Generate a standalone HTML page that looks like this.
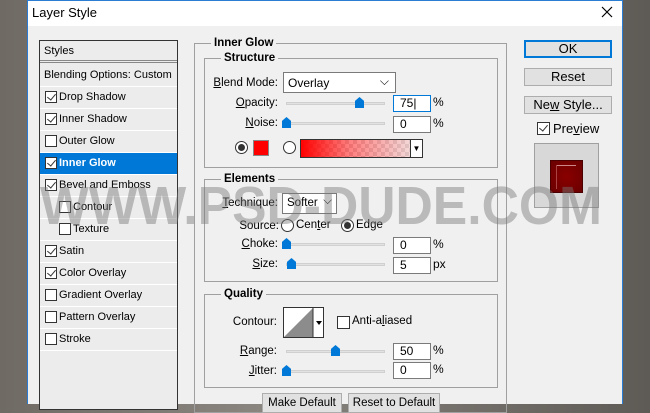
<!DOCTYPE html><html><head><style>
*{margin:0;padding:0;box-sizing:border-box}
body{width:650px;height:404px;overflow:hidden;position:relative;font:12px "Liberation Sans",sans-serif;color:#000;background:linear-gradient(90deg,#6f6a64,#8a857f 40%,#5e5a55);white-space:nowrap}
.a{position:absolute}
.dlg{left:27px;top:0;width:596px;height:404px;background:#f0f0f0;border-left:1px solid #2b7cd3;border-right:1px solid #2b7cd3;border-top:1px solid #2b7cd3}
.tb{left:28px;top:1px;width:594px;height:25px;background:#fff}
.row{position:absolute;left:40px;width:137px;height:22px;border-bottom:1px solid #fff;line-height:21px;font-size:11px}
.cb{position:absolute;width:12px;height:12px;border:1px solid #333;background:#fff}
.cb.k::after{content:"";position:absolute;left:3px;top:0px;width:4px;height:7px;border:solid #333;border-width:0 1.5px 1.5px 0;transform:rotate(40deg)}
.grp{position:absolute;border:1px solid #a0a0a0}
.gt{position:absolute;background:#f0f0f0;font-weight:bold;padding:0 3px;line-height:14px;font-size:11.5px}
.lbl{position:absolute;text-align:right;line-height:14px;font-size:11.5px}
.in{position:absolute;width:38px;height:17px;background:#fff;border:1px solid #7a7a7a;padding-left:6px;line-height:15px}
.trk{position:absolute;left:286px;width:99px;height:3px;background:#e2e2e2;border:1px solid #d0d0d0}
.th{position:absolute;width:9px;height:11px;background:#0078d7;clip-path:polygon(50% 0,100% 35%,100% 100%,0 100%,0 35%)}
.rad{position:absolute;width:13px;height:13px;border-radius:50%;border:1px solid #333;background:#fff}
.rad.on::after{content:"";position:absolute;left:2px;top:2px;width:7px;height:7px;border-radius:50%;background:#333}
.btn{position:absolute;background:#e1e1e1;border:1px solid #adadad;text-align:center;font-size:11.5px}
u{text-decoration:underline}
</style></head><body>
<div class="a dlg"></div><div class="a tb"></div>
<div class="a" style="left:32px;top:5px;font-size:13px">Layer Style</div>
<svg class="a" style="left:601px;top:6px" width="12" height="12"><path d="M1 1L11 11M11 1L1 11" stroke="#000" stroke-width="1.2"/></svg>

<!-- styles list -->
<div class="a" style="left:39px;top:40px;width:139px;height:370px;border:1px solid #333;background:#ececec"></div>
<div class="row" style="top:41px;height:22px;border-bottom:3px double #888;padding-left:4px">Styles</div>
<div class="row" style="top:65px;padding-left:4px">Blending Options: Custom</div>
<div class="row" style="top:87px"><span class="cb k" style="left:5px;top:4px"></span><span style="position:absolute;left:19px">Drop Shadow</span></div>
<div class="row" style="top:109px"><span class="cb k" style="left:5px;top:4px"></span><span style="position:absolute;left:19px">Inner Shadow</span></div>
<div class="row" style="top:131px"><span class="cb" style="left:5px;top:4px"></span><span style="position:absolute;left:19px">Outer Glow</span></div>
<div class="row" style="top:153px;background:#0078d7;color:#fff;font-weight:bold"><span class="cb k" style="left:5px;top:4px"></span><span style="position:absolute;left:19px">Inner Glow</span></div>
<div class="row" style="top:175px"><span class="cb k" style="left:5px;top:4px"></span><span style="position:absolute;left:19px">Bevel and Emboss</span></div>
<div class="row" style="top:197px"><span class="cb" style="left:19px;top:4px"></span><span style="position:absolute;left:33px">Contour</span></div>
<div class="row" style="top:219px"><span class="cb" style="left:19px;top:4px"></span><span style="position:absolute;left:33px">Texture</span></div>
<div class="row" style="top:241px"><span class="cb k" style="left:5px;top:4px"></span><span style="position:absolute;left:19px">Satin</span></div>
<div class="row" style="top:263px"><span class="cb k" style="left:5px;top:4px"></span><span style="position:absolute;left:19px">Color Overlay</span></div>
<div class="row" style="top:285px"><span class="cb" style="left:5px;top:4px"></span><span style="position:absolute;left:19px">Gradient Overlay</span></div>
<div class="row" style="top:307px"><span class="cb" style="left:5px;top:4px"></span><span style="position:absolute;left:19px">Pattern Overlay</span></div>
<div class="row" style="top:329px"><span class="cb" style="left:5px;top:4px"></span><span style="position:absolute;left:19px">Stroke</span></div>

<!-- groups -->
<div class="grp" style="left:194px;top:43px;width:313px;height:370px"></div>
<div class="gt" style="left:211px;top:36px">Inner Glow</div>
<div class="grp" style="left:204px;top:58px;width:294px;height:110px"></div>
<div class="gt" style="left:221px;top:51px">Structure</div>
<div class="grp" style="left:204px;top:179px;width:294px;height:103px"></div>
<div class="gt" style="left:221px;top:172px">Elements</div>
<div class="grp" style="left:204px;top:294px;width:294px;height:94px"></div>
<div class="gt" style="left:221px;top:287px">Quality</div>

<!-- structure -->
<div class="lbl" style="left:200px;width:78px;top:76px"><u>B</u>lend Mode:</div>
<div class="a" style="left:283px;top:72px;width:113px;height:21px;background:#fff;border:1px solid #7a7a7a;padding:3px 4px">Overlay<span style="position:absolute;right:6px;top:1px">⌵</span></div>
<div class="lbl" style="left:200px;width:78px;top:96px"><u>O</u>pacity:</div>
<div class="trk" style="top:102px"></div><div class="th" style="left:355px;top:97px"></div>
<div class="in" style="left:393px;top:95px;border:1px solid #0078d7">75|</div><div class="a" style="left:433px;top:95px">%</div>
<div class="lbl" style="left:200px;width:78px;top:116px"><u>N</u>oise:</div>
<div class="trk" style="top:122px"></div><div class="th" style="left:282px;top:117px"></div>
<div class="in" style="left:393px;top:116px">0</div><div class="a" style="left:433px;top:116px">%</div>
<div class="rad on" style="left:235px;top:141px"></div>
<div class="a" style="left:253px;top:140px;width:16px;height:16px;background:#f00;border:1px solid #888"></div>
<div class="rad" style="left:283px;top:141px"></div>
<div class="a" style="left:300px;top:139px;width:123px;height:19px;border:1px solid #333;background:linear-gradient(90deg,#f00,rgba(255,0,0,.5) 40%,rgba(220,200,200,.4)),repeating-conic-gradient(#ddd 0 25%,#fff 0 50%) 0 0/8px 8px"></div>
<div class="a" style="left:410px;top:140px;width:12px;height:17px;background:#fff;border-left:1px solid #333;font-size:8px;text-align:center;line-height:17px">▼</div>

<!-- elements -->
<div class="lbl" style="left:200px;width:78px;top:196px"><u>T</u>echnique:</div>
<div class="a" style="left:282px;top:193px;width:55px;height:21px;background:#fff;border:1px solid #7a7a7a;padding:3px 4px;font-size:11.5px">Softer<span style="position:absolute;right:4px;top:1px">⌵</span></div>
<div class="lbl" style="left:200px;width:79px;top:219px">Source:</div>
<div class="rad" style="left:281px;top:219px"></div><div class="a" style="left:296px;top:219px;font-size:11.5px">Cen<u>t</u>er</div>
<div class="rad on" style="left:341px;top:219px"></div><div class="a" style="left:356px;top:219px;font-size:11.5px">Edge</div>
<div class="lbl" style="left:200px;width:78px;top:237px"><u>C</u>hoke:</div>
<div class="trk" style="top:243px"></div><div class="th" style="left:282px;top:238px"></div>
<div class="in" style="left:393px;top:237px">0</div><div class="a" style="left:433px;top:237px">%</div>
<div class="lbl" style="left:200px;width:78px;top:257px"><u>S</u>ize:</div>
<div class="trk" style="top:263px"></div><div class="th" style="left:287px;top:258px"></div>
<div class="in" style="left:393px;top:257px">5</div><div class="a" style="left:433px;top:257px">px</div>

<!-- quality -->
<div class="lbl" style="left:200px;width:77px;top:315px">Contour:</div>
<div class="a" style="left:283px;top:307px;width:41px;height:31px;border:1px solid #333;background:#fff;overflow:hidden">
<svg width="40" height="30" style="position:absolute;left:0;top:0"><polygon points="0,29 29,0 29,29" fill="#8c8c8c"/><line x1="29" y1="0" x2="29" y2="30" stroke="#333"/><polygon points="32,13 38,13 35,17" fill="#000"/></svg></div>
<div class="cb" style="left:337px;top:316px;width:13px;height:13px"></div><div class="a" style="left:352px;top:315px;font-size:11.5px">Anti-a<u>l</u>iased</div>
<div class="lbl" style="left:200px;width:77px;top:344px"><u>R</u>ange:</div>
<div class="trk" style="top:350px"></div><div class="th" style="left:331px;top:345px"></div>
<div class="in" style="left:393px;top:343px">50</div><div class="a" style="left:433px;top:343px">%</div>
<div class="lbl" style="left:200px;width:77px;top:364px"><u>J</u>itter:</div>
<div class="trk" style="top:370px"></div><div class="th" style="left:282px;top:365px"></div>
<div class="in" style="left:393px;top:362px">0</div><div class="a" style="left:433px;top:362px">%</div>

<div class="btn" style="left:262px;top:393px;width:80px;height:20px;line-height:18px">Make Default</div>
<div class="btn" style="left:348px;top:393px;width:92px;height:20px;line-height:18px">Reset to Default</div>

<!-- right buttons -->
<div class="btn" style="left:524px;top:40px;width:88px;height:18px;border:2px solid #0078d7;line-height:14px;font-size:13px">OK</div>
<div class="btn" style="left:524px;top:68px;width:88px;height:18px;line-height:16px;font-size:13px">Reset</div>
<div class="btn" style="left:524px;top:96px;width:88px;height:18px;line-height:16px;font-size:13px">Ne<u>w</u> Style...</div>
<div class="cb k" style="left:537px;top:122px;width:13px;height:13px"></div>
<div class="a" style="left:553px;top:121px;font-size:13px">Pre<u>v</u>iew</div>
<div class="a" style="left:534px;top:143px;width:65px;height:65px;border:1px solid #a0a0a0;background:#d8d8d8"></div>
<div class="a" style="left:550px;top:160px;width:33px;height:33px;background:radial-gradient(#8a0000,#6a0000);border:1px solid #4a0000"></div>
<div class="a" style="left:556px;top:165px;width:20px;height:1px;background:#c88"></div>
<div class="a" style="left:556px;top:165px;width:1px;height:24px;background:#a44"></div>

<!-- watermark -->
<svg class="a" style="left:0;top:0" width="650" height="404"><text x="40" y="224" textLength="562" lengthAdjust="spacingAndGlyphs" font-family="Liberation Sans" font-weight="bold" font-size="54" fill="rgba(120,120,120,0.45)">WWW.PSD-DUDE.COM</text></svg>
</body></html>
